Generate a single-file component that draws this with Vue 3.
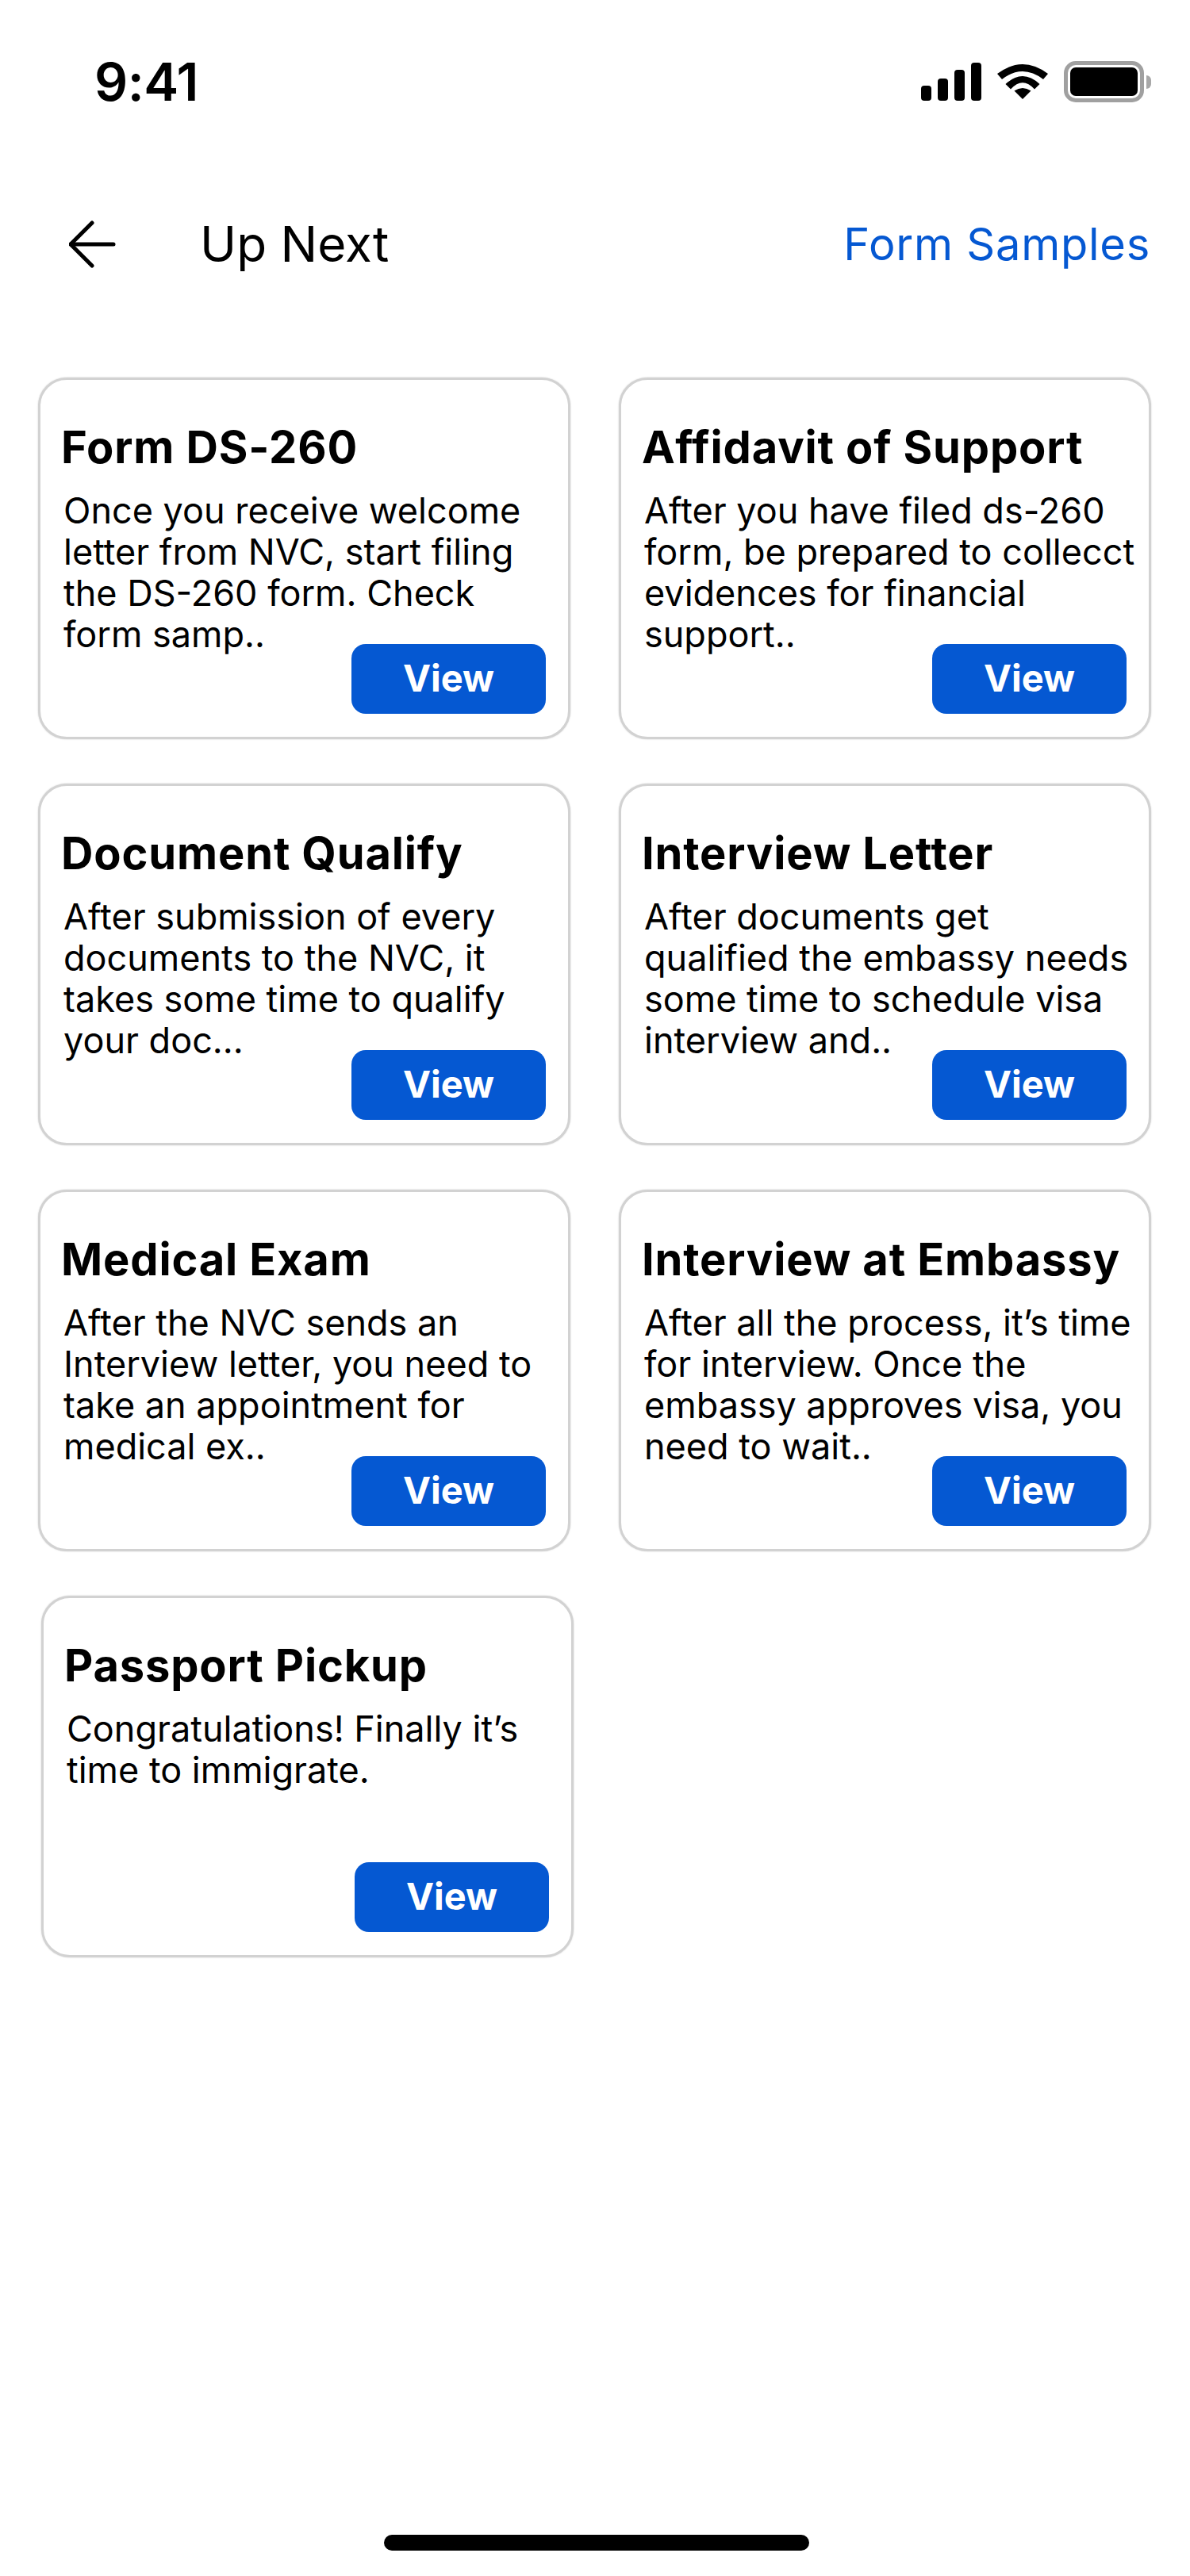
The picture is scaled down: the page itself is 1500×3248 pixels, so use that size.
<script setup>
const cards = [
  { title: 'Form DS-260', lines: ['Once you receive welcome', 'letter from NVC, start filing', 'the DS-260 form. Check', 'form samp..'] },
  { title: 'Affidavit of Support', lines: ['After you have filed ds-260', 'form, be prepared to collecct', 'evidences for financial', 'support..'] },
  { title: 'Document Qualify', lines: ['After submission of every', 'documents to the NVC, it', 'takes some time to qualify', 'your doc...'] },
  { title: 'Interview Letter', lines: ['After documents get', 'qualified the embassy needs', 'some time to schedule visa', 'interview and..'] },
  { title: 'Medical Exam', lines: ['After the NVC sends an', 'Interview letter, you need to', 'take an appointment for', 'medical ex..'] },
  { title: 'Interview at Embassy', lines: ['After all the process, it’s time', 'for interview. Once the', 'embassy approves visa, you', 'need to wait..'] },
  { title: 'Passport Pickup', lines: ['Congratulations! Finally it’s', 'time to immigrate.'], shifted: true }
]
</script>

<template>
  <div class="screen">
    <header class="status">
      <span class="time">9:41</span>
      <div class="status-icons">
        <div class="signal">
          <span class="bar b1"></span>
          <span class="bar b2"></span>
          <span class="bar b3"></span>
          <span class="bar b4"></span>
        </div>
        <svg class="wifi" viewBox="0 0 64 44" width="64" height="44">
          <path d="M32 44 L21.5 33.5 Q32 26.5 42.5 33.5 Z" />
          <path d="M10.5 25 Q32 5 53.5 25 L47 31.5 Q32 15 17 31.5 Z" />
          <path d="M0 12 Q32 -12 64 12 L58 19 Q32 -1 6 19 Z" />
        </svg>
        <div class="battery">
          <div class="battery-body"><div class="battery-fill"></div></div>
          <div class="battery-nub"></div>
        </div>
      </div>
    </header>

    <nav class="topbar">
      <svg class="back" viewBox="0 0 60 60" width="60" height="60" fill="none" stroke="#000" stroke-width="5" stroke-linecap="round" stroke-linejoin="round">
        <path d="M56 30 H2" />
        <path d="M29 3 L2 30 L29 57" />
      </svg>
      <h1 class="heading">Up Next</h1>
      <a class="samples">Form Samples</a>
    </nav>

    <main class="grid">
      <article v-for="card in cards" :key="card.title" class="card" :class="{ shifted: card.shifted }">
        <h2 class="card-title">{{ card.title }}</h2>
        <p class="card-body">
          <span v-for="line in card.lines" :key="line" class="line">{{ line }}</span>
        </p>
        <button class="view">View</button>
      </article>
    </main>

    <div class="home"></div>
  </div>
</template>

<style>
html, body { margin: 0; padding: 0; background: #fff; }
</style>

<style scoped>
.screen {
  width: 1500px;
  height: 3248px;
  background: #fff;
  display: flex;
  flex-direction: column;
  font-family: Inter, "Liberation Sans", sans-serif;
  color: #000;
  box-sizing: border-box;
}
.status {
  height: 74px;
  padding-top: 66px;
  padding-left: 119px;
  padding-right: 49px;
  display: flex;
  justify-content: space-between;
  align-items: center;
}
.time {
  font-size: 66px;
  font-weight: 600;
  letter-spacing: -0.5px;
  line-height: 74px;
}
.status-icons {
  display: flex;
  align-items: center;
  gap: 20px;
}
.signal {
  display: flex;
  align-items: flex-end;
  gap: 8px;
  height: 48px;
}
.bar { width: 13px; background: #000; border-radius: 4px; display: block; }
.b1 { height: 19px; }
.b2 { height: 28px; }
.b3 { height: 39px; }
.b4 { height: 48px; }
.wifi { fill: #000; display: block; }
.battery { display: flex; align-items: center; gap: 3px; }
.battery-body {
  width: 101px;
  height: 52px;
  box-sizing: border-box;
  border: 5px solid #a0a0a0;
  border-radius: 15px;
  padding: 3px;
}
.battery-fill { width: 100%; height: 100%; background: #000; border-radius: 7px; }
.battery-nub { width: 6px; height: 17px; background: #a8a8a8; border-radius: 0 8px 8px 0; }

.topbar {
  margin-top: 138px;
  height: 60px;
  padding-left: 87px;
  padding-right: 50px;
  display: flex;
  align-items: center;
}
.back { display: block; flex: none; }
.heading {
  margin: 0 0 0 105px;
  font-size: 62px;
  font-weight: 400;
  line-height: 60px;
}
.samples {
  margin-left: auto;
  font-size: 56px;
  font-weight: 400;
  letter-spacing: 0.75px;
  color: #0558d2;
  line-height: 60px;
}

.grid {
  margin-top: 138px;
  padding-left: 48px;
  display: grid;
  grid-template-columns: 671px 671px;
  grid-auto-rows: 456px;
  column-gap: 61px;
  row-gap: 56px;
}
.card {
  box-sizing: border-box;
  border: 3px solid #d2d2d2;
  box-shadow: 0 0 2px #c8c8c8;
  border-radius: 36px;
  background: #fff;
  padding: 53px 28px 29px 26px;
  display: flex;
  flex-direction: column;
}
.card.shifted { margin-left: 4px; margin-right: -4px; }
.card-title {
  margin: 0;
  font-size: 56px;
  font-weight: 700;
  letter-spacing: 0.85px;
  line-height: 64px;
  white-space: nowrap;
}
.card-body {
  margin: 22px 0 -20px 3px;
  font-size: 45px;
  font-weight: 400;
  line-height: 52px;
  white-space: nowrap;
}
.line { display: block; }
.view {
  margin-top: auto;
  align-self: flex-end;
  width: 245px;
  height: 88px;
  border: 0;
  border-radius: 18px;
  background: #0558d2;
  color: #fff;
  font-family: inherit;
  font-size: 47px;
  font-weight: 700;
  padding: 0 0 3px;
}
.home {
  margin: auto 0 32px 484px;
  width: 536px;
  height: 20px;
  background: #000;
  border-radius: 10px;
}
</style>
